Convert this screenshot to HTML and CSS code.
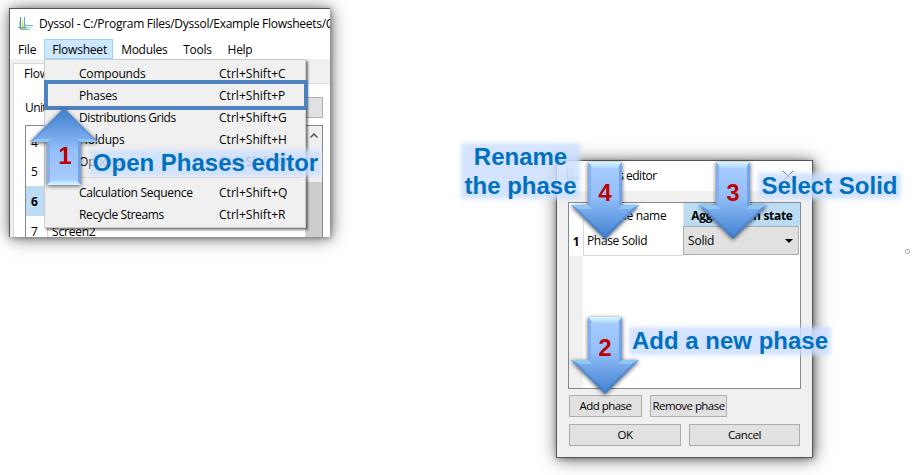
FILE: index.html
```html
<!DOCTYPE html>
<html lang="en">
<head>
<meta charset="utf-8">
<title>Dyssol phases</title>
<link rel="stylesheet" href="styles.css">
</head>
<body>
<svg class="defs" width="0" height="0">
  <defs>
    <linearGradient id="fill" x1="0" y1="0" x2="0" y2="1">
      <stop offset="0" stop-color="#a9ceff"/><stop offset=".45" stop-color="#94bffa"/><stop offset="1" stop-color="#3f80cf"/>
    </linearGradient>
    <linearGradient id="fillup" x1="0" y1="0" x2="0" y2="1">
      <stop offset="0" stop-color="#3a7ccb"/><stop offset=".55" stop-color="#94bffa"/><stop offset="1" stop-color="#a9ceff"/>
    </linearGradient>
    <linearGradient id="shine" x1="0" y1="0" x2="0" y2="1">
      <stop offset="0" stop-color="#d4f6ff"/><stop offset="1" stop-color="#b0d6ff"/>
    </linearGradient>
    <linearGradient id="shineup" x1="0" y1="1" x2="0" y2="0">
      <stop offset="0" stop-color="#d4f6ff"/><stop offset="1" stop-color="#b0d6ff"/>
    </linearGradient>
    <symbol id="down" viewBox="0 0 76 84">
      <path d="M21 4H55V47H72L38 81L4 47H21Z" fill="url(#fill)"/>
      <path d="M21 4H55L50 10H26Z" fill="url(#shine)"/>
      <path d="M21 4L24 8V49L21 47Z" fill="#7ba9ec" opacity=".8"/>
      <path d="M55 4L52 8V49L55 47Z" fill="#6a9ae0" opacity=".8"/>
      <path d="M4 47H21L25 51H12Z M72 47H55L51 51H64Z" fill="#8fccf8" opacity=".85"/>
      <path d="M4 47L38 81L72 47L66 50L38 77L10 50Z" fill="#3c74bd" opacity=".4"/>
    </symbol>
    <symbol id="up" viewBox="0 0 76 84">
      <path d="M21 80H55V37H72L38 3L4 37H21Z" fill="url(#fillup)"/>
      <path d="M21 80H55L50 75H26Z" fill="url(#shineup)"/>
      <path d="M21 80L24 76V35L21 37Z" fill="#7ba9ec" opacity=".8"/>
      <path d="M55 80L52 76V35L55 37Z" fill="#6a9ae0" opacity=".8"/>
      <path d="M4 37H21L25 34H11Z M72 37H55L51 34H65Z" fill="#8fccf8" opacity=".85"/>
      <path d="M4 37L38 3L72 37L66 34L38 7L10 34Z" fill="#4b86cf" opacity=".4"/>
    </symbol>
    <symbol id="logo" viewBox="0 0 16 16">
      <path d="M2.500 1V13" stroke="#4f9aa8"/>
      <path d="M1.500 5V12" stroke="#a9dbe0"/>
      <path d="M3 8H9V14H3Z" fill="#e9e58c" opacity=".7"/>
      <path d="M4.500 4V14" stroke="#d8d34b"/>
      <path d="M6.500 1V12" stroke="#5fa9d8"/>
      <path d="M0 11.500H8" stroke="#49b0ba"/>
      <path d="M6 9.500H15M2 13.500H12" stroke="#6ebfdd"/>
      <path d="M3 12.500H9" stroke="#c7cf55"/>
      <path d="M8 11.500H14" stroke="#b5dcf0"/>
    </symbol>
  </defs>
</svg>

<section class="window main">
  <header class="title"><svg class="logo"><use href="#logo"/></svg><span class="path">Dyssol - C:/Program Files/Dyssol/Example Flowsheets/C</span></header>
  <nav class="menubar"><span>File</span><span class="open">Flowsheet</span><span>Modules</span><span>Tools</span><span>Help</span></nav>
  <div class="client">
    <div class="tabs"><span class="tab">Flowsheet</span></div>
    <div class="pane">
      <div class="unit"><span>Unit</span><span class="unitbox"></span></div>
      <div class="grid">
        <div class="rows">
          <div class="row r4"><b>4</b><span></span></div>
          <div class="row"><b>5</b><span></span></div>
          <div class="row sel"><b>6</b><span></span></div>
          <div class="row"><b>7</b><span>Screen2</span></div>
        </div>
        <div class="scroll"><svg width="16" height="18"><path d="M4.500 11.500L8 8L11.500 11.500" fill="none" stroke="#606060" stroke-width="1.700"/></svg><i></i></div>
      </div>
    </div>
  </div>
</section>

<div class="menu">
  <div><span class="n1">Compounds</span><kbd>Ctrl+Shift+C</kbd></div>
  <div><span class="n2">Phases</span><kbd>Ctrl+Shift+P</kbd></div>
  <div><span class="n3">Distributions Grids</span><kbd>Ctrl+Shift+G</kbd></div>
  <div><span>Holdups</span><kbd>Ctrl+Shift+H</kbd></div>
  <div><span>Options</span><kbd>Ctrl+Shift+O</kbd></div>
  <hr>
  <div><span class="n6">Calculation Sequence</span><kbd>Ctrl+Shift+Q</kbd></div>
  <div><span class="n7">Recycle Streams</span><kbd>Ctrl+Shift+R</kbd></div>
</div>
<div class="frame"></div>

<section class="window dialog">
  <header class="title"><svg class="logo"><use href="#logo"/></svg><span>Phases editor</span><svg class="close" width="12" height="12"><path d="M1 1L11 11M11 1L1 11" stroke="#333" stroke-width="1"/></svg></header>
  <div class="body">
    <div class="table">
      <div class="corner"></div><div class="th">Phase name</div><div class="th agg">Aggregation state</div>
      <div class="num">1</div><div class="cell">Phase Solid</div><div class="combo"><span>Solid</span><i></i></div>
      <div class="side"></div>
    </div>
    <div class="buttons"><button class="add">Add phase</button><button class="rem">Remove phase</button></div>
    <div class="buttons last"><button class="ok">OK</button><button class="cancel">Cancel</button></div>
  </div>
</section>

<div class="label l1"><span>Open Phases editor</span></div>
<div class="label l2"><span>Add a new phase</span></div>
<div class="label l3"><span>Select Solid</span></div>
<div class="label l4"><span>Rename<br>the phase</span></div>

<div class="arrow a1"><svg><use href="#up"/></svg><b>1</b></div>
<div class="arrow a2"><svg><use href="#down"/></svg><b>2</b></div>
<div class="arrow a3"><svg><use href="#down"/></svg><b>3</b></div>
<div class="arrow a4"><svg><use href="#down"/></svg><b>4</b></div>
<i class="dot"></i>
</body>
</html>
```
FILE: styles.css
```css
* { box-sizing: border-box; }
body { margin: 0; width: 919px; height: 475px; position: relative; overflow: hidden; background: #fff; font: 12px/16px "Open Sans", "Noto Sans", sans-serif; color: #000; letter-spacing: -.2px; white-space: nowrap; }
.defs { position: absolute; }
.window { position: absolute; background: #f0f0f0; box-shadow: 1px 1px 16px rgba(0,0,0,.6), 1px 1px 5px rgba(0,0,0,.3); }
.main { left: 9px; top: 8px; width: 321px; height: 229px; border: solid #555; border-width: 1px 0 0 1px; }
.title { display: flex; align-items: center; background: #fff; height: 30px; }
.logo { width: 16px; height: 16px; flex: none; }
.main .title { padding-left: 8px; gap: 5px; overflow: hidden; }
.path { letter-spacing: -.27px; }
.menubar { display: flex; background: #fff; height: 20px; line-height: 21px; }
.menubar span { padding: 0 8px; }
.menubar .open { padding: 0 7px; background: #cce8ff; border: 1px solid #99d1ff; line-height: 20px; width: 69px; }
.menubar span:nth-child(n+3) { letter-spacing: -.3px; }
.client { overflow: hidden; height: 178px; padding: 4px 0 0 3px; }
.tabs { height: 20px; }
.tab { display: block; width: 80px; height: 21px; background: #fff; border: solid #d9d9d9; border-width: 1px 1px 0; padding-left: 10px; line-height: 20px; position: relative; }
.pane { background: #fff; border: solid #d9d9d9; border-width: 1px 0 0 1px; height: 160px; padding: 13px 7px 0 11px; }
.unit { display: flex; justify-content: space-between; height: 28px; line-height: 21px; letter-spacing: -.6px; }
.unitbox { width: 100px; height: 21px; background: #e1e1e1; border: 1px solid #adadad; }
.grid { display: flex; border: 1px solid #828790; border-bottom: 0; height: 120px; }
.rows { flex: 1; }
.row { display: flex; height: 30px; line-height: 31px; }
.row b { width: 22px; border-right: 1px solid #d8d8d8; padding-left: 5px; font-weight: 400; }
.row span { padding-left: 4px; }
.r4 b { line-height: 33px; }
.sel b { background: #bcdcf4; font-weight: 700; }
.scroll { width: 17px; background: #f0f0f0; border-left: 1px solid #ddd; }
.scroll svg { display: block; }
.scroll i { display: block; height: 80px; margin-top: 38px; background: #cdcdcd; }

.menu { position: absolute; left: 44px; top: 59px; width: 262px; height: 169px; background: #f0f0f0; border: 1px solid #ccc; padding: 3px 18px 0 34px; box-shadow: 2px 2px 2px rgba(0,0,0,.5); }
.menu div { display: flex; justify-content: space-between; height: 22px; line-height: 22px; }
.menu kbd { font: inherit; width: 68px; letter-spacing: .03px; }
.menu hr { border: 0; border-top: 1px solid #d7d7d7; margin: 4px -15px 4px -6px; height: 1px; }
.n3 { letter-spacing: -.42px; }
.n6 { letter-spacing: -.3px; }
.n7 { letter-spacing: -.38px; }
.frame { position: absolute; left: 44px; top: 80px; width: 264px; height: 30px; border: 4px solid #4f81bd; }

.dialog { left: 556px; top: 160px; width: 257px; height: 298px; border: 1px solid #555; }
.dialog .title { padding: 0 18px 0 8px; gap: 6px; letter-spacing: -.5px; }
.close { margin-left: auto; }
.body { padding: 11px 12px 0 11px; }
.table { display: grid; grid-template: 23px 30px 1fr / 14px 100px 1fr; width: 233px; height: 187px; background: #fff; border: 1px solid #828790; }
.th { text-align: center; line-height: 25px; border-left: 1px solid #e5e5e5; letter-spacing: -.3px; }
.agg { background: #bcdcf4; font-weight: 700; }
.num { text-align: center; font-weight: 700; line-height: 31px; }
.cell { border: solid #d8d8d8; border-width: 0 0 1px 1px; padding-left: 3px; line-height: 30px; letter-spacing: -.35px; }
.combo { background: #e1e1e1; border: 1px solid #adadad; display: flex; align-items: center; justify-content: space-between; padding: 0 5px 0 4px; margin-right: 1px; height: 29px; }
.combo i { border: 4px solid transparent; border-top-color: #000; border-bottom: 0; }
.side { background: #f0f0f0; }
.buttons { display: flex; gap: 8px; margin-top: 6px; }
.last { margin-top: 7px; }
button { font: inherit; font-size: 11.5px; letter-spacing: -.55px; background: #e1e1e1; border: 1px solid #adadad; height: 22px; padding: 0; line-height: 20px; }
.add { width: 73px; margin-left: 1px; }
.rem { width: 77px; }
.ok { width: 112px; margin-left: 1px; }
.cancel { width: 111px; letter-spacing: -.4px; }

.label { position: absolute; font: bold 24px/28px "Liberation Sans", Arial, sans-serif; letter-spacing: 0; color: #0070c0; text-align: center; }
.label::before { content: ""; position: absolute; inset: 0; background: rgba(204,222,255,.85); filter: blur(2px); }
.label span { position: relative; }
.l1 { left: 90px; top: 150px; width: 231px; height: 26px; line-height: 26px; }
.l2 { left: 629px; top: 327px; width: 202px; height: 28px; }
.l3 { left: 758px; top: 173px; width: 143px; height: 26px; line-height: 26px; }
.l4 { left: 461px; top: 143px; width: 119px; height: 56px; line-height: 29px; }
.l4 span { top: -1px; }
.arrow { position: absolute; width: 76px; height: 84px; filter: drop-shadow(0 1px 2px rgba(0,0,0,.65)); }
.arrow svg { display: block; width: 76px; height: 84px; }
.arrow b { position: absolute; left: 0; width: 76px; top: 22px; text-align: center; color: #c00000; font: bold 24px/26px "Liberation Sans", Arial, sans-serif; letter-spacing: 0; }
.a1 { left: 26px; top: 105px; }
.a1 b { top: 38px; left: 1px; }
.a2 { left: 567px; top: 313px; }
.a3 { left: 695px; top: 158px; }
.a4 { left: 567px; top: 158px; }
.dot { position: absolute; left: 905px; top: 249px; width: 5px; height: 5px; border: 1px solid #a9a9b8; border-radius: 2px; }
```
